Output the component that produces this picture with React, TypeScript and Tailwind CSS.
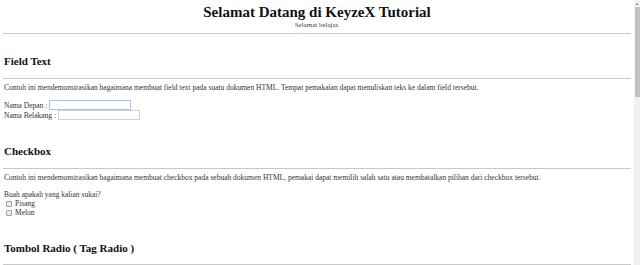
import React from "react";

function Hr() {
  return <div className="mx-[3px] h-px bg-[#c8c8c8]" />;
}

function Heading({ children }: { children: React.ReactNode }) {
  return (
    <div className="pl-[4px] text-[11px] font-bold leading-[13px] text-[#111]">{children}</div>
  );
}

function Box() {
  return (
    <span className="ml-[2px] mr-[3px] h-[6px] w-[6px] rounded-[1px] border border-[#a0a0a0] bg-[#ececec]" />
  );
}

export default function App() {
  return (
    <div className="flex h-[265px] w-[640px] overflow-hidden bg-white font-['Liberation_Serif','Times_New_Roman',serif]">
      <div className="w-[634px] text-[#333]">
        <div className="pt-[4px] text-center">
          <div className="text-[15px] font-bold leading-[17px] text-[#111]">
            Selamat Datang di KeyzeX Tutorial
          </div>
          <div className="text-[7px] leading-[8px] text-[#444]">Selamat belajar.</div>
        </div>
        <div className="mt-[4px]">
          <Hr />
        </div>

        <div className="mt-[21px]">
          <Heading>Field Text</Heading>
        </div>
        <div className="mt-[10px]">
          <Hr />
        </div>
        <div className="mt-[4px] pl-[4px] text-[7.5px] leading-[9px]">
          Contoh ini mendemonstrasikan bagaimana membuat field text pada suatu dokumen HTML. Tempat
          pemakaian dapat menuliskan teks ke dalam field tersebut.
        </div>
        <div className="mt-[8px] flex flex-col pl-[4px] text-[7.5px] leading-[9px]">
          <div className="flex h-[10px] items-center">
            <span>Nama Depan :&nbsp;</span>
            <span className="h-[10px] w-[82px] border border-[#a9c3ea] bg-white" />
          </div>
          <div className="flex h-[10px] items-center">
            <span>Nama Belakang :&nbsp;</span>
            <span className="h-[10px] w-[82px] border border-[#d2d2d2] bg-white" />
          </div>
        </div>

        <div className="mt-[25px]">
          <Heading>Checkbox</Heading>
        </div>
        <div className="mt-[10px]">
          <Hr />
        </div>
        <div className="mt-[4px] pl-[4px] text-[7.5px] leading-[9px]">
          Contoh ini mendemonstrasikan bagaimana membuat checkbox pada sebuah dokumen HTML, pemakai
          dapat memilih salah satu atau membatalkan pilihan dari checkbox tersebut.
        </div>
        <div className="mt-[8px] pl-[4px] text-[7.5px] leading-[9px]">
          <div>Buah apakah yang kalian sukai?</div>
          <div className="flex items-center">
            <Box />
            <span>Pisang</span>
          </div>
          <div className="flex items-center">
            <Box />
            <span>Melon</span>
          </div>
        </div>

        <div className="mt-[25px]">
          <Heading>Tombol Radio ( Tag Radio )</Heading>
        </div>
        <div className="mt-[9px]">
          <Hr />
        </div>
      </div>
      <div className="flex w-[6px] flex-col bg-[#f1f1f1]">
        <div className="flex h-[7px] items-center justify-center text-[4px] leading-none text-[#777]">
          ▲
        </div>
        <div className="mx-auto h-[90px] w-[5px] bg-[#c1c1c1]" />
      </div>
    </div>
  );
}
